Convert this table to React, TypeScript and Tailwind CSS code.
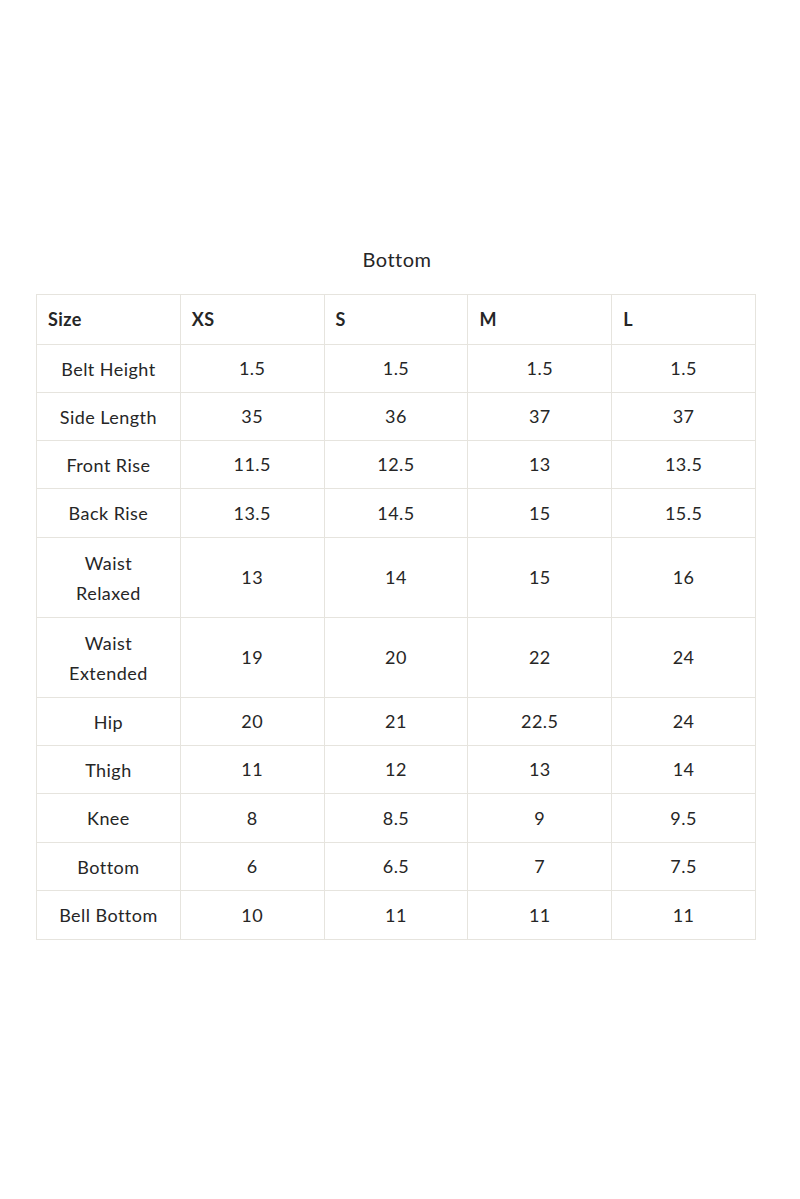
const rows: [string, string, string, string, string, number][] = [
  ['Belt Height', '1.5', '1.5', '1.5', '1.5', 48],
  ['Side Length', '35', '36', '37', '37', 48],
  ['Front Rise', '11.5', '12.5', '13', '13.5', 48],
  ['Back Rise', '13.5', '14.5', '15', '15.5', 49],
  ['Waist Relaxed', '13', '14', '15', '16', 80],
  ['Waist Extended', '19', '20', '22', '24', 80],
  ['Hip', '20', '21', '22.5', '24', 48],
  ['Thigh', '11', '12', '13', '14', 48],
  ['Knee', '8', '8.5', '9', '9.5', 49],
  ['Bottom', '6', '6.5', '7', '7.5', 48],
  ['Bell Bottom', '10', '11', '11', '11', 49],
];

const sizes = ['XS', 'S', 'M', 'L'];

export default function App() {
  return (
    <div
      className="w-[800px] h-[1199px] bg-white text-[#262626] pt-[247px]"
      style={{ fontFamily: 'Lato, "Noto Sans", sans-serif' }}
    >
      <h2 className="text-center text-[20px] leading-[24px] tracking-wide pr-[6px] mb-[23px]">Bottom</h2>
      <table className="ml-[36px] w-[720px] border-collapse table-fixed text-[18px] tracking-wide">
        <thead>
          <tr className="h-[50px]">
            <th className="border border-[#e6e4de] text-left font-bold px-[11px]">Size</th>
            {sizes.map((s) => (
              <th key={s} className="border border-[#e6e4de] text-left font-bold px-[11px]">
                {s}
              </th>
            ))}
          </tr>
        </thead>
        <tbody>
          {rows.map((r) => (
            <tr key={r[0]} style={{ height: r[5] }}>
              <td className="border border-[#e6e4de] text-center leading-[30px] px-[20px]">{r[0]}</td>
              {r.slice(1, 5).map((v, i) => (
                <td key={i} className="border border-[#e6e4de] text-center">
                  {v}
                </td>
              ))}
            </tr>
          ))}
        </tbody>
      </table>
    </div>
  );
}
